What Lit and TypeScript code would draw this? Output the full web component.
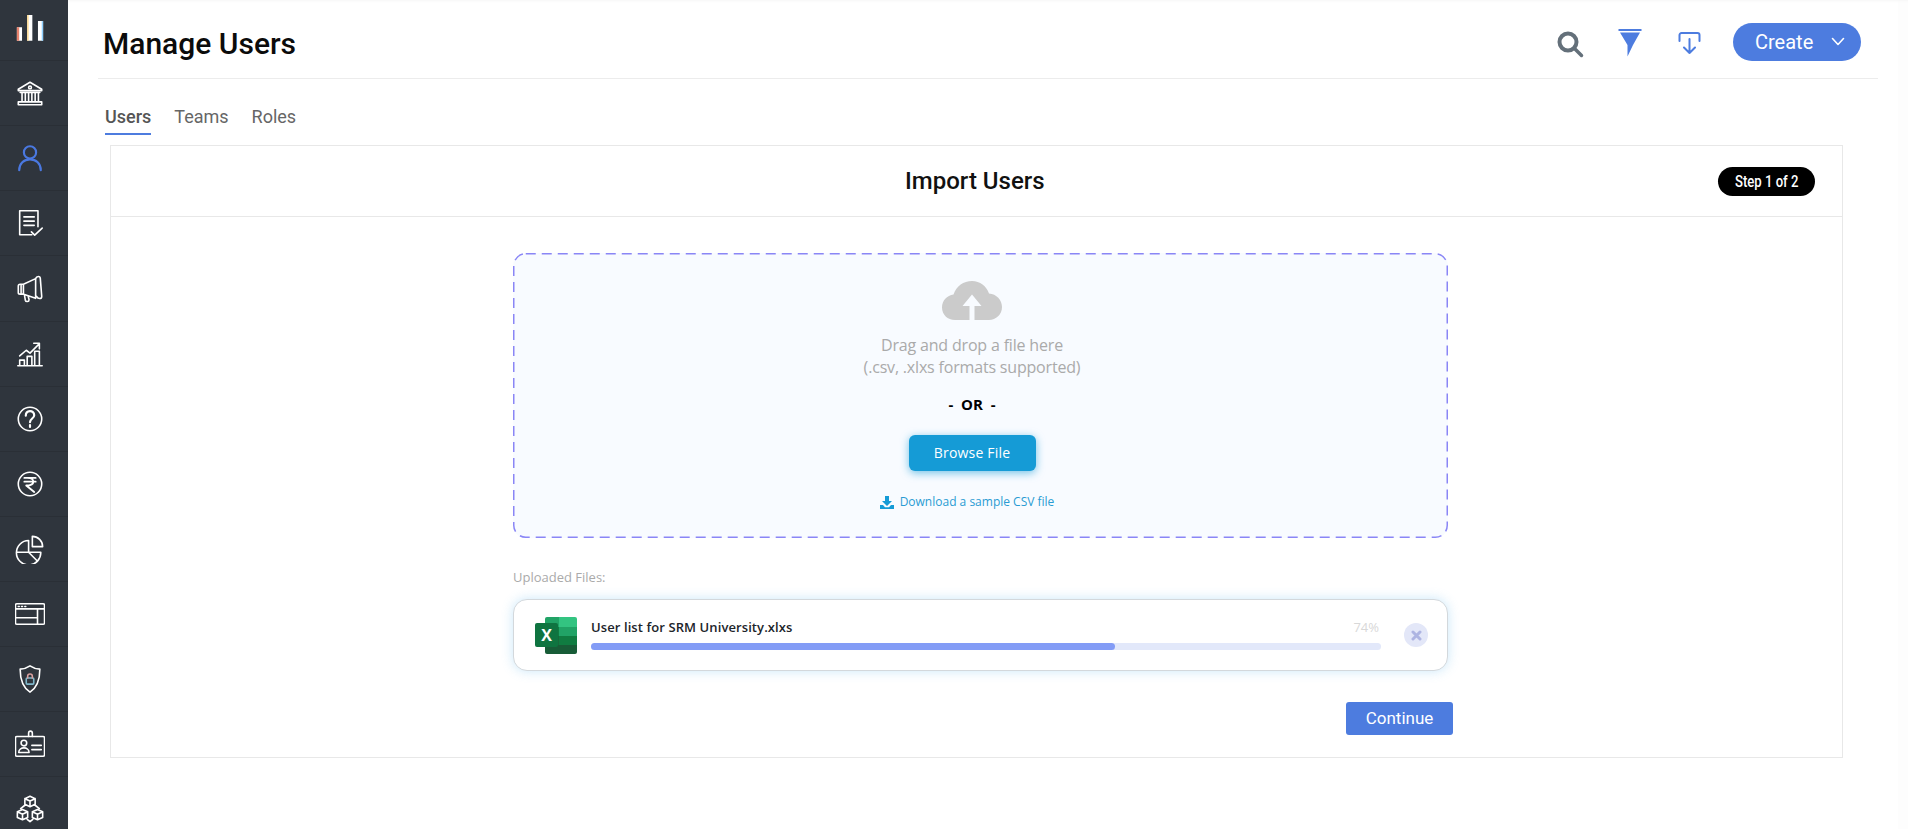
import {css, html, LitElement, svg} from 'lit';
import {customElement, property} from 'lit/decorators.js';

const navIcons = [
  svg`<path d="M2 13h5.500v14.500H2zM13 0h5.500v27.500H13zM24.500 6.500H30v21h-5.500z" fill="#fff" stroke="none"/><path d="M2 13h2.500v14.500H2z" fill="#e8836e" stroke="none"/><path d="M13 0h1.500v27.500H13z" fill="#ffd98a" stroke="none"/><path d="M28.500 6.500H30v21h-1.500z" fill="#8fd0ff" stroke="none"/>`,
  svg`<path d="M3.500 12 16 4.500 28.500 12v1.500h-25zM5.500 15.500h21M7.500 24.500V15.500M11 24.500V15.500M14.500 24.500V15.500M18 24.500V15.500M21.500 24.500V15.500M25 24.500V15.500M3.500 25.500h25v3h-25z"/><circle cx="16" cy="10" r="1.500"/>`,
  svg`<circle cx="16" cy="10" r="6.500" stroke="#4a78e0" stroke-width="2.300"/><path d="M4.500 29c0-7 5-11.500 11.500-11.500S27.500 22 27.500 29" stroke="#4a78e0" stroke-width="2.300"/>`,
  svg`<path d="M18 28.500H5V3h19.500v17M9.500 9.500h11M9.500 14h11M9.500 18.500h11"/><path d="m17.500 25.500 3.500 3.500 8-7.500"/>`,
  svg`<path d="M3.500 14v7c0 1 1 1.500 2 1.500h3L22 27V6L9 12H5.500c-1 0-2 1-2 2zM9 12v10.500M22 6c1-3 5-3 5 0l1.500 19c0 3-4 3-5.500 0M10 23l1 6c.5 2 4 2 4-.5l-1-4M6.500 12v10.500"/>`,
  svg`<path d="M3 28.500h26M5 28.500v-6h5v6M13 28.500v-10h5v10M21 28.500V13h5v15.500M5 18l7-6 4 3 9-9M20 4.500h6v6"/>`,
  svg`<circle cx="16" cy="16" r="12.500"/><path d="M11.500 12.500c0-6.500 9-6.500 9-.5 0 3.500-4.500 3.500-4.500 7.500" stroke-width="2.300"/><path d="M16 22.500v2" stroke-width="2.300"/>`,
  svg`<circle cx="16" cy="16" r="12.500"/><path d="M10 9.500h12M10 13.500h12M13 9.500c5.500 0 6.500 1.500 6.500 4s-2.500 4-7.500 4l8.500 7" stroke-width="2"/>`,
  svg`<path d="M14.500 7A13 13 0 1 0 27.500 19.500H14.500zM14.500 19.500l8.500 8.500M1.500 19.500h13M18.500 2.500c6 0 11 5 11 11h-11z"/>`,
  svg`<rect x="0.500" y="5" width="31" height="22" rx="1.500"/><path d="M.5 10.500h31M24 10.500V27M.5 20h23.500M3.500 8h1M7 8h1M10.500 8h1"/>`,
  svg`<path d="M16 2c3 2 7 3.500 10.500 3.500C26.500 17 23.500 25 16 30 8.500 25 5.500 17 5.500 5.500 9 5.500 13 4 16 2z"/><rect x="12" y="15" width="8" height="6.500" rx="1" stroke="#7fb6c9"/><path d="M13.500 15v-2c0-3.200 5-3.200 5 0v2" stroke="#d9a0a0"/>`,
  svg`<rect x="0.500" y="8" width="31" height="21" rx="1.500"/><path d="M14.500 8V4.500c0-3 4-3 4 0V8"/><circle cx="9.500" cy="15" r="3"/><path d="M4 25c0-6.500 11-6.500 11 0zM18 17.500h10M18 22h10"/>`,
  svg`<path d="m16 2.500 5.500 2.500v6L16 13.500 10.500 11V5zM10.500 5l5.500 2.500L21.500 5M16 7.500v6M8 16.500l5.500 2.500v6L8 27.500 2.500 25v-6zM2.500 19 8 21.500l5.500-2.500M8 21.500v6M24 16.500l5.500 2.500v6L24 27.500 18.500 25v-6zM18.500 19l5.500 2.500 5.500-2.500M24 21.500v6M10.500 12 6 15.500M21.500 12l4.500 3.500M13 27l3 2.500 3-2.500"/>`,
];

@customElement('side-nav')
export class SideNav extends LitElement {
  static override styles = css`
    :host {
      display: block;
      width: 68px;
      flex: none;
      height: 829px;
      overflow: hidden;
      background: #2f353d;
    }
    .row {
      height: 65.13px;
      box-sizing: border-box;
      border-bottom: 1px solid #2a2f36;
      padding-right: 8px;
      display: flex;
      align-items: center;
      justify-content: center;
    }
    .row:first-child {
      height: 61px;
    }
    svg {
      width: 30px;
      height: 30px;
      fill: none;
      stroke: #fff;
      stroke-width: 1.7;
      stroke-linejoin: round;
      stroke-linecap: round;
    }
  `;

  override render() {
    return navIcons.map(
      (icon) => html`<div class="row"><svg viewBox="0 0 32 32">${icon}</svg></div>`
    );
  }
}

@customElement('file-row')
export class FileRow extends LitElement {
  static override styles = css`
    :host {
      display: flex;
      align-items: center;
      box-sizing: border-box;
      height: 72px;
      padding: 0 19px 0 21px;
      background: #fff;
      border: 1px solid #d3d8dc;
      border-radius: 14px;
      box-shadow: 0 0 12px rgba(90, 180, 235, 0.32);
    }
    .xl {
      width: 42px;
      height: 38px;
      flex: none;
      margin-right: 14px;
    }
    .xl text {
      font: 700 16px 'Open Sans', sans-serif;
      fill: #fff;
    }
    .info {
      flex: 1;
      min-width: 0;
      margin-top: -3px;
    }
    .top {
      display: flex;
      justify-content: space-between;
      align-items: center;
      height: 20px;
      padding-right: 2px;
      margin-bottom: 6px;
    }
    .name {
      font: 600 13px 'Open Sans', sans-serif;
      color: #20242a;
      letter-spacing: 0.09px;
    }
    .pct {
      font: 400 13px 'Open Sans', sans-serif;
      color: #d8d8d8;
    }
    .track {
      height: 7px;
      border-radius: 4px;
      background: #e2e8fa;
    }
    .fill {
      height: 100%;
      border-radius: 4px;
      background: #839cf6;
    }
    .remove {
      width: 24px;
      height: 24px;
      flex: none;
      margin-left: 23px;
      border-radius: 50%;
      background: #e3e7f8;
      display: flex;
      align-items: center;
      justify-content: center;
    }
    .remove svg {
      width: 11px;
      height: 11px;
    }
  `;

  @property() name = '';
  @property({type: Number}) percent = 0;

  override render() {
    return html`
      <svg class="xl" viewBox="0 0 42 38">
        <path d="M10 3a2 2 0 0 1 2-2h12v10H10z" fill="#21a366" />
        <path d="M24 1h16a2 2 0 0 1 2 2v8H24z" fill="#33c481" />
        <path d="M10 11h14v9H10z" fill="#107c41" />
        <path d="M24 11h18v9H24z" fill="#21a366" />
        <path d="M10 20h14v9H10z" fill="#17693b" />
        <path d="M24 20h18v9H24z" fill="#107c41" />
        <path d="M10 29h32v7a2 2 0 0 1-2 2H12a2 2 0 0 1-2-2z" fill="#185c37" />
        <rect x="0" y="7" width="23" height="24" rx="2" fill="#0f7440" />
        <text x="11.500" y="24.500" text-anchor="middle">X</text>
      </svg>
      <div class="info">
        <div class="top">
          <span class="name">${this.name}</span>
          <span class="pct">${this.percent}%</span>
        </div>
        <div class="track">
          <div class="fill" style="width:${this.percent * 0.896}%"></div>
        </div>
      </div>
      <div class="remove">
        <svg viewBox="0 0 11 11"><path d="M2 2l7 7M9 2l-7 7" stroke="#aeb5e2" stroke-width="3" stroke-linecap="round" /></svg>
      </div>
    `;
  }
}

@customElement('app-root')
export class AppRoot extends LitElement {
  static override styles = css`
    :host {
      display: flex;
      width: 100%;
      height: 829px;
      overflow: hidden;
      background: #fff;
      font-family: Roboto, sans-serif;
    }
    main {
      flex: 1;
      min-width: 0;
      box-shadow: inset 0 3px 3px -2px #f6f6f6, inset -10px 0 0 #fdfdfd;
    }
    header {
      display: flex;
      align-items: center;
      box-sizing: border-box;
      width: 1780px;
      height: 79px;
      margin-left: 30px;
      padding: 5px 17px 0 5px;
      border-bottom: 1px solid #ececec;
    }
    h1 {
      flex: 1;
      margin: 4px 0 0;
      font-size: 30px;
      font-weight: 500;
      color: #0b0b0b;
    }
    .search {
      width: 28px;
      height: 28px;
      margin: 4px 34px 0 -1px;
    }
    .filter {
      width: 24px;
      height: 28px;
      margin: 3px 36px 0 0;
    }
    .tray {
      width: 23px;
      height: 22px;
      margin: 2px 32px 0 0;
    }
    .create {
      display: flex;
      align-items: center;
      justify-content: space-between;
      box-sizing: border-box;
      width: 128px;
      height: 38px;
      padding: 0 16px 0 22px;
      border-radius: 19px;
      background: #4d7cdf;
      color: #fff;
      font-size: 20px;
    }
    .create svg {
      width: 14px;
      height: 9px;
    }
    nav {
      display: flex;
      gap: 23px;
      height: 56px;
      box-sizing: border-box;
      margin-left: 37px;
      padding-top: 27px;
      font-size: 18px;
      color: #666;
    }
    nav span {
      height: 29px;
      box-sizing: border-box;
    }
    nav .on {
      color: #555;
      font-weight: 500;
      border-bottom: 2px solid #4d7cdf;
    }
    .card {
      box-sizing: border-box;
      width: 1733px;
      height: 613px;
      margin: 10px 0 0 42px;
      border: 1px solid #e8e8e8;
    }
    .card-head {
      display: flex;
      align-items: center;
      justify-content: space-between;
      box-sizing: border-box;
      height: 71px;
      padding: 0 27px 0 794px;
      border-bottom: 1px solid #e8e8e8;
    }
    h2 {
      margin: 0;
      font-size: 24px;
      font-weight: 500;
      color: #111;
    }
    .step {
      width: 97px;
      height: 29px;
      line-height: 29px;
      text-align: center;
      border-radius: 15px;
      background: #000;
      color: #fff;
      font-size: 16px;
      font-weight: 500;
    }
    .step span {
      display: inline-block;
      transform: scaleX(0.82);
      white-space: nowrap;
    }
    .card-body {
      width: 935px;
      margin-left: 402px;
      padding-top: 36px;
      font-family: 'Open Sans', sans-serif;
    }
    .zone {
      position: relative;
      box-sizing: border-box;
      height: 285px;
      padding: 27px 17px 0 0;
      border-radius: 13px;
      background: #f8fbff;
      display: flex;
      flex-direction: column;
      align-items: center;
    }
    .dash {
      position: absolute;
      inset: 0;
      width: 100%;
      height: 100%;
      overflow: visible;
    }
    .cloud {
      width: 60px;
      height: 42px;
      margin-bottom: 12px;
    }
    .hint {
      font-size: 16px;
      line-height: 22px;
      color: #aaa;
      text-align: center;
      letter-spacing: -0.18px;
    }
    .or {
      margin-top: 16px;
      font-size: 15px;
      line-height: 21px;
      font-weight: 700;
      color: #000;
      white-space: pre;
    }
    .browse {
      width: 127px;
      height: 36px;
      margin-top: 20px;
      line-height: 36px;
      text-align: center;
      border-radius: 6px;
      background: #159bd6;
      color: #fff;
      font-size: 14px;
      font-weight: 500;
      letter-spacing: 0.2px;
      box-shadow: 0 2px 9px rgba(21, 155, 214, 0.6);
    }
    .sample {
      display: flex;
      align-items: center;
      gap: 6px;
      margin: 22px 10px 0 0;
      font-size: 12px;
      line-height: 18px;
      color: #2a9bd3;
    }
    .sample svg {
      width: 14px;
      height: 13px;
    }
    .label {
      margin: 30px 0 13px;
      font-size: 13px;
      line-height: 18px;
      color: #aaa;
    }
    .actions {
      display: flex;
      justify-content: flex-end;
      margin: 31px -5px 0 0;
    }
    .continue {
      width: 107px;
      height: 33px;
      text-align: center;
      border-radius: 3px;
      background: #4d7cdf;
      color: #fff;
      font: 400 17px/33px Roboto, sans-serif;
    }
  `;

  override render() {
    return html`
      <side-nav></side-nav>
      <main>
        <header>
          <h1>Manage Users</h1>
          <svg class="search" viewBox="0 0 28 28" fill="none" stroke="#64707a">
            <circle cx="12" cy="12" r="8.500" stroke-width="4" />
            <path d="m18.500 18.500 7 7" stroke-width="3.500" stroke-linecap="round" />
          </svg>
          <svg class="filter" viewBox="0 0 24 28" fill="#4d7cdf">
            <rect x="0.500" y="0" width="23" height="2" />
            <path d="M2 3.500h20L15 16 9.500 27.500V16z" />
          </svg>
          <svg class="tray" viewBox="0 0 23 22" fill="none" stroke="#4d7cdf" stroke-width="2" stroke-linecap="round" stroke-linejoin="round">
            <path d="M1.500 9V3a2 2 0 0 1 2-2h16a2 2 0 0 1 2 2v6" />
            <path d="M11.500 7v14M6 15.500l5.500 5.500 5.500-5.500" />
          </svg>
          <div class="create">
            Create
            <svg viewBox="0 0 14 9" fill="none" stroke="#fff" stroke-width="1.600" stroke-linecap="round" stroke-linejoin="round"><path d="m1.500 1.500 5.500 6 5.500-6" /></svg>
          </div>
        </header>
        <nav>
          <span class="on">Users</span>
          <span>Teams</span>
          <span>Roles</span>
        </nav>
        <section class="card">
          <div class="card-head">
            <h2>Import Users</h2>
            <div class="step"><span>Step 1 of 2</span></div>
          </div>
          <div class="card-body">
            <div class="zone">
              <svg class="dash"><rect x="0.750" y="0.750" width="933.500" height="283.500" rx="12" fill="none" stroke="#8a86f6" stroke-width="1.500" stroke-dasharray="10 6" /></svg>
              <svg class="cloud" viewBox="0 0 60 42">
                <path d="M13 40C5.500 40 0 34.500 0 27.500 0 20.500 5 15.500 11.500 14.500 14.500 6 21.500 1 30 1c8 0 14.500 5 17 12.500C54.500 14 60 20 60 27c0 7.500-6 13-13 13z" fill="#cbcbcb" />
                <path d="M30 14.500 39.500 26h-7v14h-5V26h-7z" fill="#f8fbff" />
              </svg>
              <div class="hint">Drag and drop a file here<br />(.csv, .xlxs formats supported)</div>
              <div class="or">-  OR  -</div>
              <div class="browse">Browse File</div>
              <div class="sample">
                <svg viewBox="0 0 14 13" fill="#159bd6"><path d="M5 0h4v5h3L7 10 2 5h3zM0 9h3l2 2.200h4L11 9h3v4H0z" /></svg>
                Download a sample CSV file
              </div>
            </div>
            <div class="label">Uploaded Files:</div>
            <file-row name="User list for SRM University.xlxs" percent="74"></file-row>
            <div class="actions"><div class="continue">Continue</div></div>
          </div>
        </section>
      </main>
    `;
  }
}
